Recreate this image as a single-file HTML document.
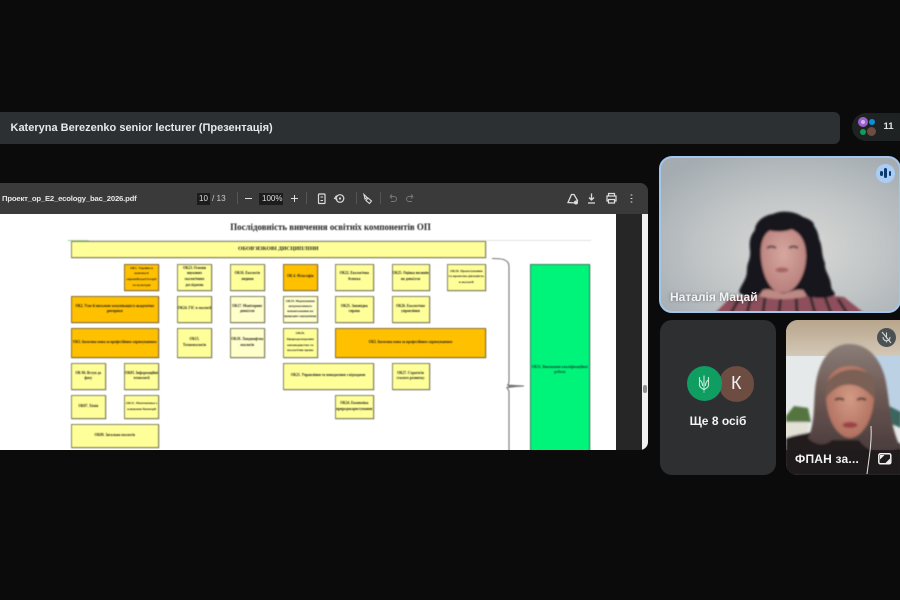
<!DOCTYPE html>
<html><head><meta charset="utf-8">
<style>
html,body{margin:0;padding:0;background:#0b0b0b;}
#r{position:relative;width:900px;height:600px;overflow:hidden;background:#0b0b0b;font-family:"Liberation Sans",sans-serif;}
#r div{position:absolute;box-sizing:border-box;}
.ui{color:#e8e8e8;white-space:nowrap;}
#pw{left:0;top:214px;width:616px;height:235.5px;background:#fff;overflow:hidden;}
#pg{left:0;top:0;width:616px;height:235.5px;filter:blur(.45px);}
.b{border:1px solid #85855c;background:#ffff99;font-family:"Liberation Serif",serif;font-weight:bold;font-size:3.6px;line-height:5.6px;color:#1c1c1c;text-align:center;display:flex;align-items:center;justify-content:center;white-space:nowrap;box-shadow:.4px .4px 0 #aaa;}
.o{background:#ffc000;border-color:#8a7030;}
.p{background:#ffffcc;}
#tb{left:0;top:0;width:900px;height:600px;filter:blur(.3px);}
</style></head><body>
<div id="r">
  <!-- Top bar -->
  <div style="left:0;top:112px;width:840px;height:31.5px;background:#2d3032;border-radius:0 6px 6px 0;"></div>
  <div class="ui" style="left:10.5px;top:120.5px;font-size:11px;font-weight:bold;line-height:14px;color:#e6e8ea;filter:blur(.25px);">Kateryna Berezenko senior lecturer (Презентація)</div>
  <div style="left:852px;top:112.5px;width:60px;height:28px;border-radius:14px;background:#1f2223;"></div>
  <div style="left:858px;top:117px;width:10px;height:10px;border-radius:50%;background:#9a5fd0;"></div>
  <div style="left:861px;top:120px;width:4px;height:4px;border-radius:50%;background:#d4b8e8;"></div>
  <div style="left:869px;top:119px;width:6px;height:6px;border-radius:50%;background:#0b8fdc;"></div>
  <div style="left:860px;top:129px;width:6px;height:6px;border-radius:50%;background:#0f9d58;"></div>
  <div style="left:867px;top:127px;width:9px;height:9px;border-radius:50%;background:#6d4c41;"></div>
  <div class="ui" style="left:883.5px;top:121px;font-size:9.5px;font-weight:bold;line-height:12px;color:#dfe1e3;">11</div>

  <!-- PDF viewer -->
  <div style="left:0;top:183px;width:648px;height:266.5px;background:#262626;border-radius:0 8px 8px 0;overflow:hidden;">
    <div style="left:0;top:0;width:648px;height:31px;background:#3a3a3a;"></div>
    <div style="left:642px;top:31px;width:6px;height:236px;background:#f1f1f1;"></div>
    <div style="left:643px;top:202px;width:4px;height:8px;background:#8f8f8f;border-radius:2px;"></div>
  </div>
  <div id="tb">
  <div class="ui" style="left:2px;top:192.5px;font-size:7.7px;line-height:12px;color:#e6e6e6;font-weight:bold;letter-spacing:-.18px;">Проект_ор_Е2_ecology_bac_2026.pdf</div>
  <div style="left:197px;top:192.5px;width:13px;height:12px;background:#1c1c1c;"></div>
  <div class="ui" style="left:199px;top:193px;font-size:8px;line-height:11px;color:#ddd;">10</div>
  <div class="ui" style="left:212px;top:193px;font-size:8.2px;line-height:11px;color:#ccc;">/ 13</div>
  <div style="left:236.5px;top:192px;width:1px;height:12px;background:#555;"></div>
  <div style="left:245px;top:198px;width:7px;height:1.4px;background:#ddd;"></div>
  <div style="left:259px;top:192.5px;width:24px;height:12px;background:#1c1c1c;"></div>
  <div class="ui" style="left:262px;top:193px;font-size:8px;line-height:11px;color:#ddd;">100%</div>
  <div style="left:291px;top:198px;width:7px;height:1.4px;background:#ddd;"></div>
  <div style="left:293.8px;top:195px;width:1.4px;height:7px;background:#ddd;"></div>
  <div style="left:305.5px;top:192px;width:1px;height:12px;background:#555;"></div>
  <div style="left:355.5px;top:192px;width:1px;height:12px;background:#555;"></div>
  <div style="left:380px;top:192px;width:1px;height:12px;background:#555;"></div>
  <svg style="position:absolute;left:0;top:183px" width="648" height="31" fill="none" stroke="#ddd" stroke-width="1.2">
    <rect x="318.500" y="11" width="6.500" height="9.500" rx=".8"/><path d="M320.500 14h2.500M320.500 17.500h2.500" stroke-width=".9"/>
    <circle cx="340" cy="15.500" r="3.800"/><path d="M336.500 12.500l-2 3 3 1" stroke-width="1"/><circle cx="340" cy="15.500" r="1.100" fill="#ddd" stroke="none"/>
    <path d="M364 11.500l3 3-2 1.500zM368 15l3.500 3-2 2.500-3.500-3z" stroke-width="1.100"/>
    <path d="M390 13.500h4a2.500 2.500 0 0 1 0 5h-3M390 13.500l2-2M390 13.500l2 2" stroke="#777" stroke-width="1"/>
    <path d="M413 13.500h-4a2.500 2.500 0 0 0 0 5h3M413 13.500l-2-2M413 13.500l-2 2" stroke="#777" stroke-width="1"/>
    <path d="M568 19.500l3.500-8h2.500l3.500 6-1.500 2.500z" stroke-width="1.300"/><circle cx="576" cy="19.500" r="2" fill="#ddd" stroke="none"/>
    <path d="M591.500 10.500v6M589 14.500l2.500 2.500 2.500-2.500M588 20h7" stroke-width="1.300"/>
    <path d="M608.500 13v-2.500h6V13M608.500 18h-1.500v-5h9v5h-1.500M608.500 16.500h6v3.500h-6z" stroke-width="1.200"/>
    <path d="M631.500 11.500v1M631.500 15v1M631.500 18.500v1" stroke-width="1.700"/>
  </svg>
  </div>

  <!-- PDF page -->
  <div id="pw"><div id="pg">
    <div style="left:0;top:6.500px;width:661px;text-align:center;font-family:'Liberation Serif',serif;font-weight:bold;font-size:8.900px;line-height:12px;color:#222;white-space:nowrap;">Послідовність вивчення освітніх компонентів ОП</div>
    <div style="left:68px;top:26px;width:523px;height:1px;background:#e2e2e2;"></div>
    <div style="left:68px;top:26px;width:21px;height:1px;background:#9fce9f;"></div>
    <div class="b" style="left:70.500px;top:27px;width:415.500px;height:17px;font-size:5.600px;background:#ffff99;">ОБОВ'ЯЗКОВІ ДИСЦИПЛІНИ</div>

    <div class="b o" style="left:124px;top:49.500px;width:35px;height:27px;font-size:3.300px;">ОК1. Україна в<br>контексті<br>європейської історії<br>та культури</div>
    <div class="b" style="left:177px;top:49.500px;width:35px;height:27px;">ОК23. Основи<br>наукових<br>екологічних<br>досліджень</div>
    <div class="b" style="left:229.500px;top:49.500px;width:35.500px;height:27px;">ОК16. Екологія<br>людини</div>
    <div class="b o" style="left:282.500px;top:49.500px;width:35.500px;height:27px;">ОК 4. Філософія</div>
    <div class="b" style="left:335px;top:49.500px;width:38.500px;height:27px;">ОК22. Екологічна<br>безпека</div>
    <div class="b" style="left:391.500px;top:49.500px;width:38px;height:27px;">ОК25. Оцінка впливів<br>на довкілля</div>
    <div class="b" style="left:446.500px;top:49.500px;width:39.500px;height:27px;font-size:3.400px;">ОК28. Проєктування<br>та проектна діяльність<br>в екології</div>

    <div class="b o" style="left:70.500px;top:81.500px;width:88.500px;height:27.500px;">ОК2. Усне й письмове комунікація із академічне<br>риторики</div>
    <div class="b" style="left:177px;top:81.500px;width:35px;height:27.500px;">ОК24. ГІС в екології</div>
    <div class="b p" style="left:229.500px;top:81.500px;width:35.500px;height:27.500px;">ОК17. Моніторинг<br>довкілля</div>
    <div class="b p" style="left:282.500px;top:81.500px;width:35.500px;height:27.500px;font-size:3.300px;line-height:5.200px;">ОК19. Нормування<br>антропогенного<br>навантаження на<br>природне середовище</div>
    <div class="b" style="left:335px;top:81.500px;width:38.500px;height:27.500px;">ОК25. Заповідна<br>справа</div>
    <div class="b" style="left:391.500px;top:81.500px;width:38px;height:27.500px;">ОК26. Екологічне<br>управління</div>

    <div class="b o" style="left:70.500px;top:113.500px;width:88.500px;height:30px;">ОК3. Іноземна мова за професійним спрямуванням</div>
    <div class="b" style="left:177px;top:113.500px;width:35px;height:30px;">ОК15.<br>Техноекологія</div>
    <div class="b p" style="left:229.500px;top:113.500px;width:35.500px;height:30px;">ОК18. Ландшафтна<br>екологія</div>
    <div class="b" style="left:282.500px;top:113.500px;width:35.500px;height:30px;font-size:3.400px;">ОК20.<br>Природоохоронне<br>законодавство та<br>екологічне право</div>
    <div class="b o" style="left:335px;top:113.500px;width:151px;height:30px;">ОК3. Іноземна мова за професійним спрямуванням</div>

    <div class="b" style="left:70.500px;top:149px;width:35.500px;height:26.500px;">ОК 06. Вступ до<br>фаху</div>
    <div class="b" style="left:124px;top:149px;width:35px;height:26.500px;">ОК05. Інформаційні<br>технології</div>
    <div class="b" style="left:282.500px;top:149px;width:91px;height:26.500px;">ОК21. Управління та поводження з відходами</div>
    <div class="b" style="left:391.500px;top:149px;width:38px;height:26.500px;">ОК27. Стратегія<br>сталого розвитку</div>

    <div class="b" style="left:70.500px;top:180.500px;width:35.500px;height:24.500px;">ОК07. Хімія</div>
    <div class="b" style="left:124px;top:180.500px;width:35px;height:24.500px;font-size:3.400px;">ОК11. Математика з<br>основами біометрії</div>
    <div class="b" style="left:335px;top:180.500px;width:38.500px;height:24.500px;">ОК24. Економіка<br>природокористування</div>

    <div class="b" style="left:70.500px;top:210px;width:88.500px;height:23.500px;">ОК09. Загальна екологія</div>

    <div class="b" style="left:529.500px;top:49.500px;width:60.500px;height:190px;background:#00f47a;border-color:#2a8a5a;align-items:flex-start;padding-top:100px;color:#143;">ОК31. Виконання кваліфікаційної<br>роботи</div>
    <svg style="position:absolute;left:490px;top:40px" width="40" height="200" fill="none" stroke="#777" stroke-width="1.100">
      <path d="M2 4.500c8 0 17 0 17 8V126c0 4-1 5-2 5 2 0 8 .500 17 1-9 .500-15 1-17 1.500-1 .500 2 1.500 2 4V200"/>
      <path d="M18 131l16 1-16 2z" fill="#777" stroke="none"/>
    </svg>
  </div></div>

  <!-- Tile 1 -->
  <div style="left:658.500px;top:155.500px;width:242px;height:157px;border:2px solid #a3c6ee;border-radius:13px;overflow:hidden;background:#b4b9bc;">
    <svg style="position:absolute;left:-2px;top:-2px" width="242" height="157">
      <defs>
        <radialGradient id="g1" cx=".55" cy=".6" r=".7"><stop offset="0" stop-color="#dbdad7"/><stop offset=".5" stop-color="#c2c6c7"/><stop offset="1" stop-color="#a4acb1"/></radialGradient>
        <radialGradient id="fc" cx=".5" cy=".4" r=".6"><stop offset="0" stop-color="#d6a79f"/><stop offset="1" stop-color="#b97f7c"/></radialGradient>
        <filter id="f1"><feGaussianBlur stdDeviation="1.100"/></filter>
      </defs>
      <rect width="242" height="157" fill="url(#g1)"/>
      <g filter="url(#f1)">
        <path d="M56 157l14-14 25-5h60l30 3 20 16z" fill="#8d4f5c"/>
        <path d="M72 157l8-14M88 157l4-16M104 157l2-16M120 157l2-18M138 157l-1-18M156 157l-5-18M172 157l-6-16M188 157l-9-14" stroke="#2f282c" stroke-width="2.800"/>
        <path d="M80 136c2-8 8-12 8-22 0-8 4-10 3-20-1-8 0-14 5-20 0-8 9-15 18-16 8-4 22-3 30 3 9 4 15 12 16 22 4 8 2 16 6 24-1 8 5 12 6 22 0 6 4 6 4 10-8 4-18 3-26 2l-12-4-40 2c-6 2-14 2-18-3z" fill="#17131a"/>
        <path d="M102 100c-1-19 6-29 22-28 15 0 23 11 23 28 0 17-9 37-24 37-12 0-20-19-21-37z" fill="url(#fc)"/>
        <path d="M100 70c8 6 24 8 36 2l8 8c4 4 4 10 5 14l6-26c-6-12-48-12-55 2z" fill="#17131a"/>
        <path d="M104 134c8-2 12 1 20 4 8-3 14-5 20-4l4 6c-14 4-34 4-48 0z" fill="#bd8984"/>
        <ellipse cx="123" cy="114" rx="6.500" ry="2.500" fill="#a4635f"/>
        <path d="M108 92c3-2 6-2 9 0M130 92c3-2 6-2 9 0" stroke="#4e3234" stroke-width="2" fill="none"/>
      </g>
    </svg>
    <div style="left:9.500px;top:132px;font-size:12px;font-weight:bold;line-height:15px;color:#f1f3f4;white-space:nowrap;text-shadow:0 0 3px rgba(0,0,0,.45);">Наталія Мацай</div>
    <div style="left:215px;top:6px;width:19px;height:19px;border-radius:50%;background:#a9cdf5;"></div>
    <div style="left:219.500px;top:13px;width:2.500px;height:5px;border-radius:1.500px;background:#0b3a72;"></div>
    <div style="left:223.500px;top:10.500px;width:3px;height:10px;border-radius:1.500px;background:#0b3a72;"></div>
    <div style="left:228px;top:13px;width:2.500px;height:5px;border-radius:1.500px;background:#0b3a72;"></div>
  </div>

  <!-- Tile 2 -->
  <div style="left:660px;top:320px;width:116px;height:154.500px;border-radius:12px;background:#2e2f31;"></div>
  <div style="left:718.500px;top:366px;width:35.500px;height:35.500px;border-radius:50%;background:#6d4c41;"></div>
  <div class="ui" style="left:718.500px;top:366px;width:35.500px;height:35.500px;text-align:center;font-size:18px;line-height:35.500px;color:#f1f1f1;">К</div>
  <div style="left:686.500px;top:366px;width:35px;height:35px;border-radius:50%;background:#0f9d62;"></div>
  <svg style="position:absolute;left:696px;top:374px" width="16" height="20" fill="none" stroke="#c6ecd6" stroke-width="1.100">
    <path d="M8 1.500V15M8 17.500v1M3.500 3v8c0 3 3 3 4.500 5 1.500-2 4.500-2 4.500-5V3M3.500 6c2 1 3 3 3 6M12.500 6c-2 1-3 3-3 6"/>
  </svg>
  <div class="ui" style="left:660px;top:413px;width:116px;text-align:center;font-size:12px;font-weight:bold;line-height:16px;color:#f1f3f4;">Ще 8 осіб</div>

  <!-- Tile 3 -->
  <div style="left:785.500px;top:320px;width:114.500px;height:154.500px;border-radius:12px 0 0 12px;overflow:hidden;background:#cfc6b8;">
    <svg style="position:absolute;left:0;top:0" width="115" height="155">
      <defs>
        <filter id="f3"><feGaussianBlur stdDeviation="1.100"/></filter>
        <linearGradient id="w" x1="0" y1="0" x2="0" y2="1"><stop offset="0" stop-color="#b8a58c"/><stop offset="1" stop-color="#d3c8b6"/></linearGradient>
        <linearGradient id="hr" x1="0" y1="0" x2="0" y2="1"><stop offset="0" stop-color="#8b7d78"/><stop offset=".5" stop-color="#6a5652"/><stop offset="1" stop-color="#4a3c3c"/></linearGradient>
        <radialGradient id="fd" cx=".5" cy=".45" r=".6"><stop offset="0" stop-color="#d39a84"/><stop offset="1" stop-color="#ad6c5c"/></radialGradient>
      </defs>
      <rect width="115" height="36" fill="url(#w)"/>
      <rect y="36" width="115" height="90" fill="#e6e9ea"/>
      <rect x="86" y="36" width="29" height="60" fill="#bcd2e4"/>
      <g filter="url(#f3)">
        <path d="M0 96l8-10 14 2 3 14H0z" fill="#55753f"/>
        <path d="M96 100l7-14 12 6v16z" fill="#3a6660"/>
        <rect y="102" width="22" height="18" fill="#e3e0d6"/>
        <path d="M0 118c18-6 40-8 58-8s40 6 57 14v31H0z" fill="#241c1f"/>
        <path d="M22 118c8-16 5-38 8-56 4-24 16-38 33-38 18 0 29 12 35 30 6 20 4 50 17 74-20 8-34 4-42-8H46c-6 6-16 6-24-2z" fill="url(#hr)"/>
        <path d="M40 78c-1-22 8-32 24-32 15 0 24 10 24 30 0 20-10 41-24 42-14-1-23-20-24-40z" fill="url(#fd)"/>
        <path d="M40 64c10-16 34-20 48-6l1 22C76 62 54 58 40 78z" fill="#7a6055"/>
        <ellipse cx="64" cy="105" rx="7.500" ry="3" fill="#9e3f47"/>
        <path d="M49 80c3-2 6-2 9 0M71 80c3-2 6-2 9 0" stroke="#3c2a26" stroke-width="2" fill="none"/>
      </g>
      <rect y="130" width="115" height="25" fill="#1f1a1c" opacity=".85"/>
      <path d="M85 106c1 16-2 32-4 48" stroke="#e6e3dc" stroke-width="1" fill="none"/>
    </svg>
    <div style="left:91px;top:7.500px;width:19px;height:19px;border-radius:50%;background:#4b5152;"></div>
    <svg style="position:absolute;left:94px;top:10.500px" width="13" height="13" fill="none" stroke="#d6d8d8" stroke-width="1.100">
      <path d="M6.500 1.500v6M3 6c0 5 7 5 7 0M6.500 9.500v2M2 1l9 11"/>
    </svg>
    <div style="left:9.500px;top:131px;font-size:12px;font-weight:bold;line-height:16px;color:#f4f4f4;white-space:nowrap;letter-spacing:.2px;">ФПАН за...</div>
    <svg style="position:absolute;left:92px;top:133px" width="14" height="12">
      <rect x=".800" y=".800" width="12" height="10" rx="1.500" fill="none" stroke="#f1f1f1" stroke-width="1.500"/>
      <path d="M2 2h4.500L2 6.500zM12 10H7.500L12 5.500z" fill="#f1f1f1"/>
    </svg>
  </div>
</div>
</body></html>
